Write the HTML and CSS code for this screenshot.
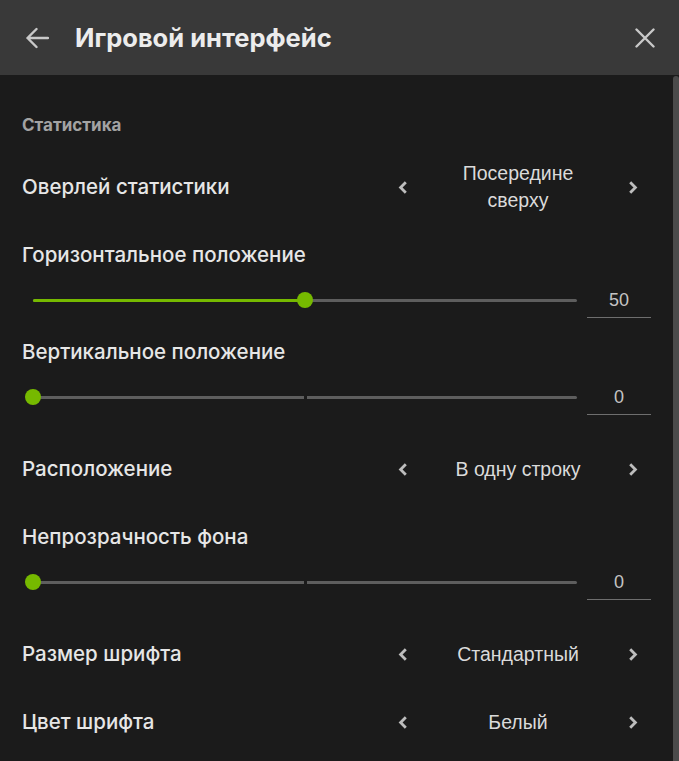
FILE: index.html
```html
<!DOCTYPE html>
<html lang="ru">
<head>
<meta charset="utf-8">
<title>Игровой интерфейс</title>
<link rel="stylesheet" href="styles.css">
</head>
<body>
<div class="panel">
  <header class="header">
    <button class="icon-btn back" aria-label="Назад">
      <svg width="24" height="22" viewBox="0 0 24 22"><path d="M23 11H2.5M11.5 2L2.5 11l9 9" fill="none" stroke="#c9c9c9" stroke-width="2.4" stroke-linecap="round" stroke-linejoin="round"/></svg>
    </button>
    <h1 class="title">Игровой интерфейс</h1>
    <button class="icon-btn close" aria-label="Закрыть">
      <svg width="20" height="20" viewBox="0 0 20 20"><path d="M1.5 1.5l17 17M18.5 1.5l-17 17" fill="none" stroke="#c9c9c9" stroke-width="2.4" stroke-linecap="round"/></svg>
    </button>
  </header>
  <div class="body">
    <main class="content">
      <div class="section-title">Статистика</div>

      <div class="select-row">
        <div class="label">Оверлей статистики</div>
        <div class="selector">
          <span class="chev"><svg width="10" height="13" viewBox="0 0 10 13"><path d="M7.8 1.3L2.6 6.5l5.2 5.2" fill="none" stroke="#bdbdbd" stroke-width="2.8"/></svg></span>
          <span class="value two">Посередине<br>сверху</span>
          <span class="chev"><svg width="10" height="13" viewBox="0 0 10 13"><path d="M2.2 1.3l5.2 5.2-5.2 5.2" fill="none" stroke="#bdbdbd" stroke-width="2.8"/></svg></span>
        </div>
      </div>

      <div class="slider-group">
        <div class="label">Горизонтальное положение</div>
        <div class="slider-row">
          <div class="slider">
            <div class="track">
              <div class="fill" style="width:50%"></div>
              <div class="thumb" style="left:50%"></div>
            </div>
          </div>
          <div class="num">50</div>
        </div>
      </div>

      <div class="slider-group">
        <div class="label">Вертикальное положение</div>
        <div class="slider-row">
          <div class="slider">
            <div class="track gap">
              <div class="fill" style="width:0%"></div>
              <div class="thumb" style="left:0%"></div>
            </div>
          </div>
          <div class="num">0</div>
        </div>
      </div>

      <div class="select-row">
        <div class="label">Расположение</div>
        <div class="selector">
          <span class="chev"><svg width="10" height="13" viewBox="0 0 10 13"><path d="M7.8 1.3L2.6 6.5l5.2 5.2" fill="none" stroke="#bdbdbd" stroke-width="2.8"/></svg></span>
          <span class="value">В одну строку</span>
          <span class="chev"><svg width="10" height="13" viewBox="0 0 10 13"><path d="M2.2 1.3l5.2 5.2-5.2 5.2" fill="none" stroke="#bdbdbd" stroke-width="2.8"/></svg></span>
        </div>
      </div>

      <div class="slider-group">
        <div class="label">Непрозрачность фона</div>
        <div class="slider-row">
          <div class="slider">
            <div class="track gap">
              <div class="fill" style="width:0%"></div>
              <div class="thumb" style="left:0%"></div>
            </div>
          </div>
          <div class="num">0</div>
        </div>
      </div>

      <div class="select-row">
        <div class="label">Размер шрифта</div>
        <div class="selector">
          <span class="chev"><svg width="10" height="13" viewBox="0 0 10 13"><path d="M7.8 1.3L2.6 6.5l5.2 5.2" fill="none" stroke="#bdbdbd" stroke-width="2.8"/></svg></span>
          <span class="value">Стандартный</span>
          <span class="chev"><svg width="10" height="13" viewBox="0 0 10 13"><path d="M2.2 1.3l5.2 5.2-5.2 5.2" fill="none" stroke="#bdbdbd" stroke-width="2.8"/></svg></span>
        </div>
      </div>

      <div class="select-row">
        <div class="label">Цвет шрифта</div>
        <div class="selector">
          <span class="chev"><svg width="10" height="13" viewBox="0 0 10 13"><path d="M7.8 1.3L2.6 6.5l5.2 5.2" fill="none" stroke="#bdbdbd" stroke-width="2.8"/></svg></span>
          <span class="value">Белый</span>
          <span class="chev"><svg width="10" height="13" viewBox="0 0 10 13"><path d="M2.2 1.3l5.2 5.2-5.2 5.2" fill="none" stroke="#bdbdbd" stroke-width="2.8"/></svg></span>
        </div>
      </div>
    </main>
    <div class="scrollbar"><div class="scroll-thumb"></div></div>
  </div>
</div>
</body>
</html>
```

FILE: styles.css
```css
* { box-sizing: border-box; }
html, body {
  margin: 0;
  height: 100%;
  background: #1b1b1b;
  overflow: hidden;
}
body {
  font-family: Inter, Roboto, "Liberation Sans", Arial, sans-serif;
  color: #e4e4e4;
}
.panel {
  display: flex;
  flex-direction: column;
  height: 761px;
}
.header {
  height: 75px;
  flex: none;
  background: #393939;
  display: flex;
  align-items: center;
  padding: 0 24px 0 25px;
}
.icon-btn {
  background: none;
  border: 0;
  padding: 0;
  display: flex;
  align-items: center;
  justify-content: center;
  cursor: pointer;
}
.back { width: 24px; height: 22px; margin-right: 26px; margin-top: 1px; }
.close { width: 20px; height: 20px; margin-left: auto; }
.title {
  margin: 0;
  font-size: 25.5px;
  font-weight: 700;
  color: #ececec;
}
.body {
  flex: 1;
  display: flex;
  min-height: 0;
}
.content {
  flex: 1;
  padding: 40px 22px 0 22px;
  display: block;
}
.scrollbar {
  width: 6px;
  flex: none;
  padding-top: 1px;
}
.scroll-thumb {
  height: 100%;
  background: #4b4b4b;
  border-radius: 3px 3px 0 0;
}
.section-title {
  font-size: 17px;
  font-weight: 700;
  color: #a3a3a3;
  line-height: 20px;
  margin-bottom: 18px;
}
.label {
  font-size: 20.5px;
  font-weight: 500;
  line-height: 24px;
  color: #e6e6e6;
}
.select-row {
  height: 68px;
  display: flex;
  align-items: center;
  justify-content: space-between;
}
.selector {
  width: 266px;
  display: flex;
  align-items: center;
}
.chev {
  width: 36px;
  display: flex;
  justify-content: center;
  align-items: center;
}
.value {
  flex: 1;
  text-align: center;
  font-family: "Liberation Sans", Arial, sans-serif;
  font-size: 19.5px;
  color: #dadada;
  line-height: 27px;
}
.slider-group {
  margin: 22px 0 20px;
}
.slider-row {
  margin-top: 15px;
  height: 36px;
  display: flex;
  align-items: center;
}
.slider {
  flex: 1;
  padding: 0 10px 0 11px;
}
.track {
  position: relative;
  height: 3px;
  background: #5e5e5e;
  border-radius: 2px;
}
.track.gap {
  background: linear-gradient(to right, #5e5e5e calc(50% - 1px), transparent calc(50% - 1px), transparent calc(50% + 2px), #5e5e5e calc(50% + 2px));
}
.fill {
  height: 100%;
  background: #76b900;
  border-radius: 2px;
}
.thumb {
  position: absolute;
  top: 50%;
  width: 16px;
  height: 16px;
  margin: -8px 0 0 -8px;
  border-radius: 50%;
  background: #76b900;
}
.num {
  width: 64px;
  height: 36px;
  border-bottom: 1px solid #6e6e6e;
  text-align: center;
  line-height: 36px;
  font-family: "Liberation Sans", Arial, sans-serif;
  font-size: 18px;
  color: #c4c4c4;
}
```
